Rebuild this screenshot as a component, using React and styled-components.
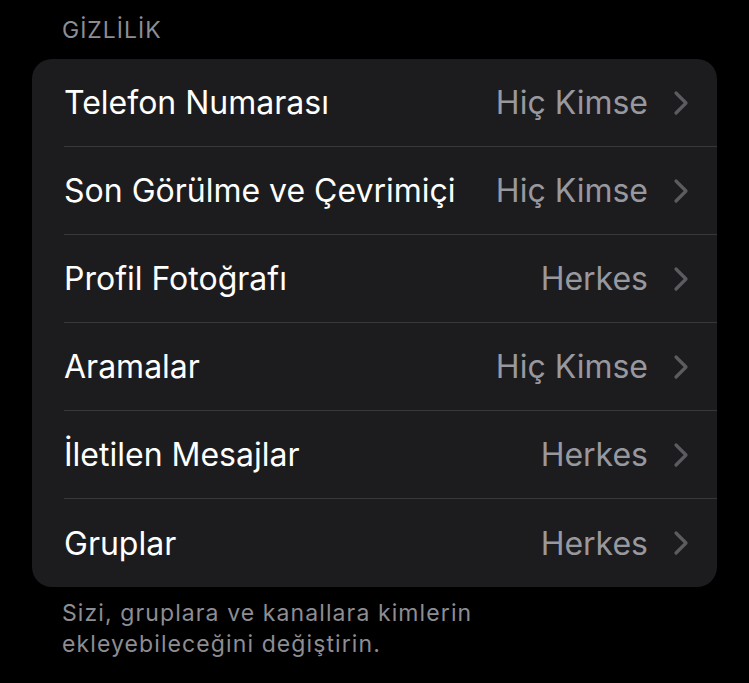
import React from "react";
import styled, { createGlobalStyle } from "styled-components";

const GlobalStyle = createGlobalStyle`
  html, body {
    margin: 0;
    padding: 0;
    background: #000;
  }
  body {
    font-family: Inter, "Liberation Sans", sans-serif;
    -webkit-font-smoothing: antialiased;
  }
`;

const Page = styled.div`
  width: 749px;
  height: 683px;
  box-sizing: border-box;
  padding: 14px 32px 0 32px;
  background: #000;
  overflow: hidden;
`;

const SectionTitle = styled.div`
  margin: 0 0 13px 30px;
  font-size: 23px;
  line-height: 32px;
  color: #8d8d93;
  letter-spacing: 1px;
`;

const Card = styled.div`
  background: #1c1c1e;
  border-radius: 20px;
  overflow: hidden;
`;

const Row = styled.div`
  display: flex;
  align-items: center;
  height: 88px;
  margin-left: 32px;
  padding-right: 28px;
  box-sizing: border-box;
  border-bottom: ${(p) => (p.$last ? "none" : "1px solid #38383a")};
`;

const Label = styled.span`
  flex: 1;
  font-size: 32px;
  color: #fff;
  white-space: nowrap;
`;

const Value = styled.span`
  font-size: 32px;
  color: #98989f;
  margin-right: 25px;
  white-space: nowrap;
`;

const Chevron = styled.svg`
  width: 16px;
  height: 26px;
  flex-shrink: 0;
`;

const Footer = styled.p`
  margin: 11px 0 0 30px;
  font-size: 23px;
  line-height: 31px;
  color: #8d8d93;
  letter-spacing: 1.1px;
  width: 440px;
`;

const rows = [
  ["Telefon Numarası", "Hiç Kimse"],
  ["Son Görülme ve Çevrimiçi", "Hiç Kimse"],
  ["Profil Fotoğrafı", "Herkes"],
  ["Aramalar", "Hiç Kimse"],
  ["İletilen Mesajlar", "Herkes"],
  ["Gruplar", "Herkes"],
];

export default () => (
  <Page>
    <GlobalStyle />
    <SectionTitle>GİZLİLİK</SectionTitle>
    <Card>
      {rows.map(([label, value], i) => (
        <Row key={label} $last={i === rows.length - 1}>
          <Label>{label}</Label>
          <Value>{value}</Value>
          <Chevron viewBox="0 0 16 26">
            <path
              d="M3 3 L13 13 L3 23"
              fill="none"
              stroke="#5b5b60"
              strokeWidth="3.2"
              strokeLinecap="round"
              strokeLinejoin="round"
            />
          </Chevron>
        </Row>
      ))}
    </Card>
    <Footer>
      Sizi, gruplara ve kanallara kimlerin ekleyebileceğini değiştirin.
    </Footer>
  </Page>
);
